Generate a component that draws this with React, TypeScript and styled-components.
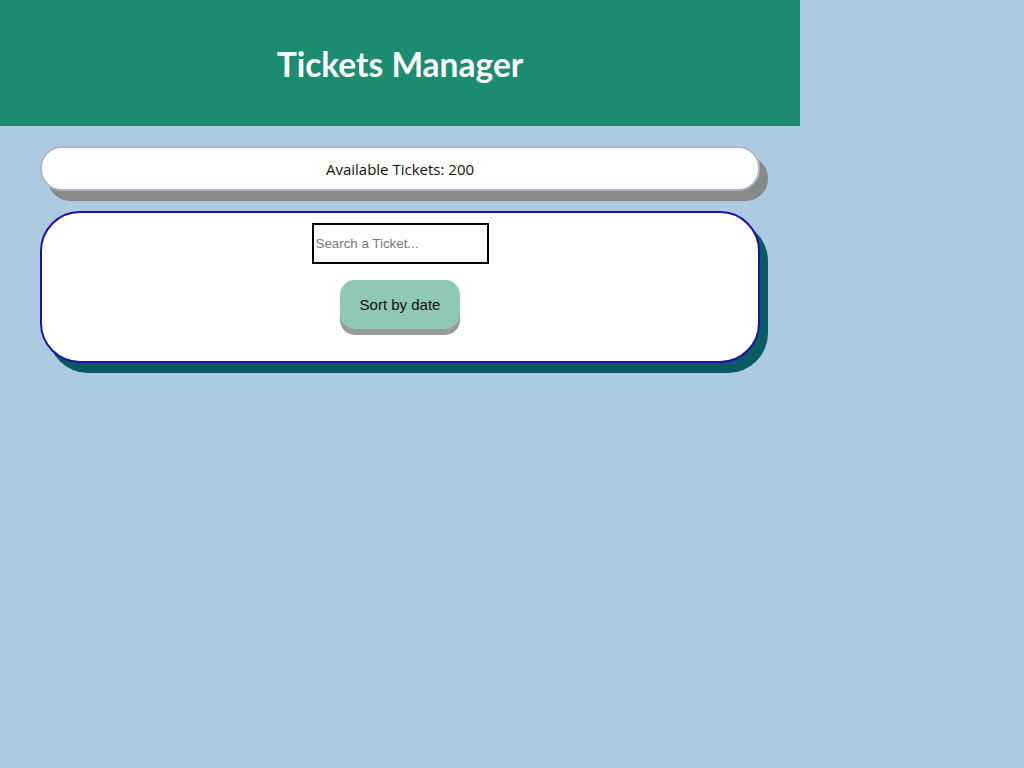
import React from "react";
import styled, { createGlobalStyle } from "styled-components";

const Global = createGlobalStyle`
  html, body {
    margin: 0;
    padding: 0;
    background: #adcbe0;
    min-height: 100%;
  }
  body {
    font-family: "Open Sans", "Liberation Sans", sans-serif;
  }
`;

const Page = styled.div`
  width: 800px;
  display: flex;
  flex-direction: column;
`;

const Header = styled.header`
  height: 126px;
  background: #1b8c70;
  display: flex;
  align-items: center;
  justify-content: center;
`;

const Title = styled.h1`
  margin: 0;
  color: #ffffff;
  font-family: "Lato", "Open Sans", sans-serif;
  font-weight: 700;
  font-size: 33.5px;
  line-height: 1;
  padding-top: 3px;
`;

const Content = styled.main`
  display: flex;
  flex-direction: column;
  padding: 20px 40px;
  gap: 20px;
`;

const Card = styled.section<{ $border: string; $shadow: string; $radius: number }>`
  background: #ffffff;
  border: 2px solid ${(p) => p.$border};
  border-radius: ${(p) => p.$radius}px;
  box-shadow: 8px 10px 0 ${(p) => p.$shadow};
  box-sizing: border-box;
`;

const CountCard = styled(Card)`
  height: 45px;
  display: flex;
  align-items: center;
  justify-content: center;
  font-family: "Open Sans", sans-serif;
  font-size: 15px;
  color: #111;
`;

const SearchCard = styled(Card)`
  height: 152px;
  display: flex;
  flex-direction: column;
  align-items: center;
  padding-top: 10px;
  gap: 16px;
`;

const SearchInput = styled.input`
  width: 177px;
  height: 41px;
  box-sizing: border-box;
  border: 2px solid #000;
  padding: 1px 2px;
  font-family: "Liberation Sans", Arial, sans-serif;
  font-size: 13.33px;
  outline: none;
  &::placeholder {
    color: #777;
  }
`;

const SortButton = styled.button`
  width: 120px;
  height: 49px;
  border: none;
  border-radius: 15px;
  background: #8fc8b4;
  box-shadow: 0 6px 0 #999999;
  font-family: "Liberation Sans", Arial, sans-serif;
  font-size: 15px;
  color: #111;
  cursor: pointer;
`;

export default function App() {
  return (
    <>
      <Global />
      <Page>
        <Header>
          <Title>Tickets Manager</Title>
        </Header>
        <Content>
          <CountCard $border="#b3b3d3" $shadow="#898989" $radius={22}>
            Available Tickets: 200
          </CountCard>
          <SearchCard $border="#2010b0" $shadow="#075a66" $radius={40}>
            <SearchInput placeholder="Search a Ticket..." />
            <SortButton>Sort by date</SortButton>
          </SearchCard>
        </Content>
      </Page>
    </>
  );
}
